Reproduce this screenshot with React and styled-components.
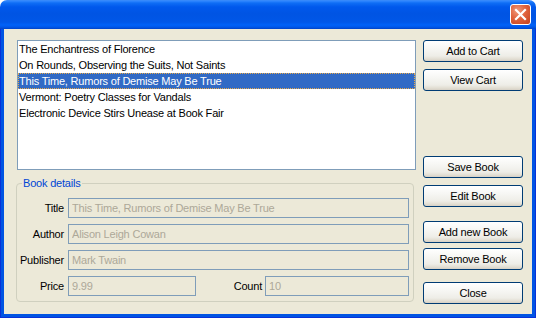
import styled, { createGlobalStyle } from "styled-components";

const GlobalStyle = createGlobalStyle`
  html, body {
    margin: 0;
    padding: 0;
    background: #ffffff;
  }
  * {
    box-sizing: border-box;
  }
`;

const Window = styled.div`
  width: 536px;
  height: 318px;
  display: flex;
  flex-direction: column;
  font-family: "Liberation Sans", Arial, sans-serif;
  font-size: 11px;
  letter-spacing: -0.2px;
  color: #000;
`;

const TitleBar = styled.div`
  height: 29px;
  flex: none;
  display: flex;
  align-items: center;
  justify-content: flex-end;
  padding-right: 5px;
  border-radius: 7px 7px 0 0;
  background: linear-gradient(
    to bottom,
    #3d8cf6 0px,
    #2f86ff 1px,
    #0f6ef5 3px,
    #0058ec 7px,
    #0054e3 14px,
    #0057e8 22px,
    #0062f8 25px,
    #0058ea 27px,
    #0043c8 29px
  );
`;

const CloseButton = styled.button`
  width: 21px;
  height: 21px;
  padding: 0;
  border: 1px solid #ffffff;
  border-radius: 3px;
  background: radial-gradient(
    circle at 35% 30%,
    #f09a7c 0%,
    #e0633d 45%,
    #c4401c 100%
  );
  display: flex;
  align-items: center;
  justify-content: center;
`;

const Frame = styled.div`
  flex: 1;
  display: flex;
  background: #0054e3;
  padding: 0 4px 4px 4px;
  box-shadow: inset 1px 0 #0831d9, inset -1px 0 #0831d9, inset 0 -1px #0831d9;
`;

const Body = styled.div`
  flex: 1;
  background: #ece9d8;
  display: flex;
  gap: 7px;
  padding: 11px 9px 0 12px;
`;

const LeftColumn = styled.div`
  width: 400px;
  display: flex;
  flex-direction: column;
`;

const ListBox = styled.ul`
  list-style: none;
  margin: 0 0 0 1px;
  width: 399px;
  height: 130px;
  padding: 0;
  background: #ffffff;
  border: 1px solid #7f9db9;
`;

const ListItem = styled.li`
  height: 16px;
  line-height: 16px;
  padding-left: 1px;
  white-space: nowrap;
  background: ${(p) => (p.$selected ? "#316ac5" : "transparent")};
  color: ${(p) => (p.$selected ? "#ffffff" : "#000000")};
  outline: ${(p) => (p.$selected ? "1px dotted #e7a94a" : "none")};
  outline-offset: -1px;
`;

const GroupBox = styled.div`
  position: relative;
  margin-top: 13px;
  width: 398px;
  height: 119px;
  border: 1px solid #d0d0bf;
  border-radius: 4px;
  padding: 14px 4px 0 0;
  display: flex;
  flex-direction: column;
  gap: 6px;
`;

const GroupLegend = styled.span`
  position: absolute;
  top: -8px;
  left: 5px;
  padding: 0 1px;
  background: #ece9d8;
  color: #0046d5;
  line-height: 14px;
`;

const FieldRow = styled.div`
  display: flex;
  align-items: center;
  height: 20px;
`;

const FieldLabel = styled.label`
  width: ${(p) => (p.$width ? `${p.$width}px` : "auto")};
  flex: ${(p) => (p.$grow ? 1 : "none")};
  text-align: right;
  margin-right: ${(p) => p.$gap ?? 4}px;
  white-space: nowrap;
`;

const TextField = styled.input`
  height: 20px;
  width: ${(p) => (p.$width ? `${p.$width}px` : "auto")};
  flex: ${(p) => (p.$width ? "none" : 1)};
  min-width: 0;
  margin: 0;
  padding: 0 3px;
  border: 1px solid #7f9db9;
  background: #ece9d8;
  color: #aca899;
  font-family: inherit;
  font-size: 11px;
  letter-spacing: -0.2px;
  -webkit-text-fill-color: #aca899;
  opacity: 1;
`;

const ButtonColumn = styled.div`
  width: 100px;
  display: flex;
  flex-direction: column;
`;

const PushButton = styled.button`
  width: 100px;
  height: 22px;
  margin-top: ${(p) => p.$top ?? 0}px;
  padding: 0;
  border: 1px solid #003c74;
  border-radius: 3px;
  background: linear-gradient(
    to bottom,
    #ffffff 0%,
    #f6f6f3 40%,
    #eeede7 75%,
    #e2ded3 90%,
    #d6d0c5 100%
  );
  font-family: inherit;
  font-size: 11px;
  letter-spacing: -0.2px;
  color: #000000;
`;

const books = [
  "The Enchantress of Florence",
  "On Rounds, Observing the Suits, Not Saints",
  "This Time, Rumors of Demise May Be True",
  "Vermont: Poetry Classes for Vandals",
  "Electronic Device Stirs Unease at Book Fair",
];

const CloseIcon = () => (
  <svg width="13" height="13" viewBox="0 0 13 13">
    <path
      d="M2 2 L11 11 M11 2 L2 11"
      stroke="#ffffff"
      strokeWidth="2.2"
      strokeLinecap="square"
    />
  </svg>
);

const App = () => {
  const selected = 2;

  return (
    <Window>
      <GlobalStyle />
      <TitleBar>
        <CloseButton aria-label="Close">
          <CloseIcon />
        </CloseButton>
      </TitleBar>
      <Frame>
        <Body>
          <LeftColumn>
            <ListBox>
              {books.map((title, i) => (
                <ListItem key={title} $selected={i === selected}>
                  {title}
                </ListItem>
              ))}
            </ListBox>
            <GroupBox>
              <GroupLegend>Book details</GroupLegend>
              <FieldRow>
                <FieldLabel $width={47}>Title</FieldLabel>
                <TextField disabled value="This Time, Rumors of Demise May Be True" readOnly />
              </FieldRow>
              <FieldRow>
                <FieldLabel $width={47}>Author</FieldLabel>
                <TextField disabled value="Alison Leigh Cowan" readOnly />
              </FieldRow>
              <FieldRow>
                <FieldLabel $width={47}>Publisher</FieldLabel>
                <TextField disabled value="Mark Twain" readOnly />
              </FieldRow>
              <FieldRow>
                <FieldLabel $width={47}>Price</FieldLabel>
                <TextField disabled value="9.99" readOnly $width={128} />
                <FieldLabel $grow $gap={3}>Count</FieldLabel>
                <TextField disabled value="10" readOnly $width={144} />
              </FieldRow>
            </GroupBox>
          </LeftColumn>
          <ButtonColumn>
            <PushButton>Add to Cart</PushButton>
            <PushButton $top={7}>View Cart</PushButton>
            <PushButton $top={65}>Save Book</PushButton>
            <PushButton $top={7}>Edit Book</PushButton>
            <PushButton $top={14}>Add new Book</PushButton>
            <PushButton $top={5}>Remove Book</PushButton>
            <PushButton $top={12}>Close</PushButton>
          </ButtonColumn>
        </Body>
      </Frame>
    </Window>
  );
};

export default App;
